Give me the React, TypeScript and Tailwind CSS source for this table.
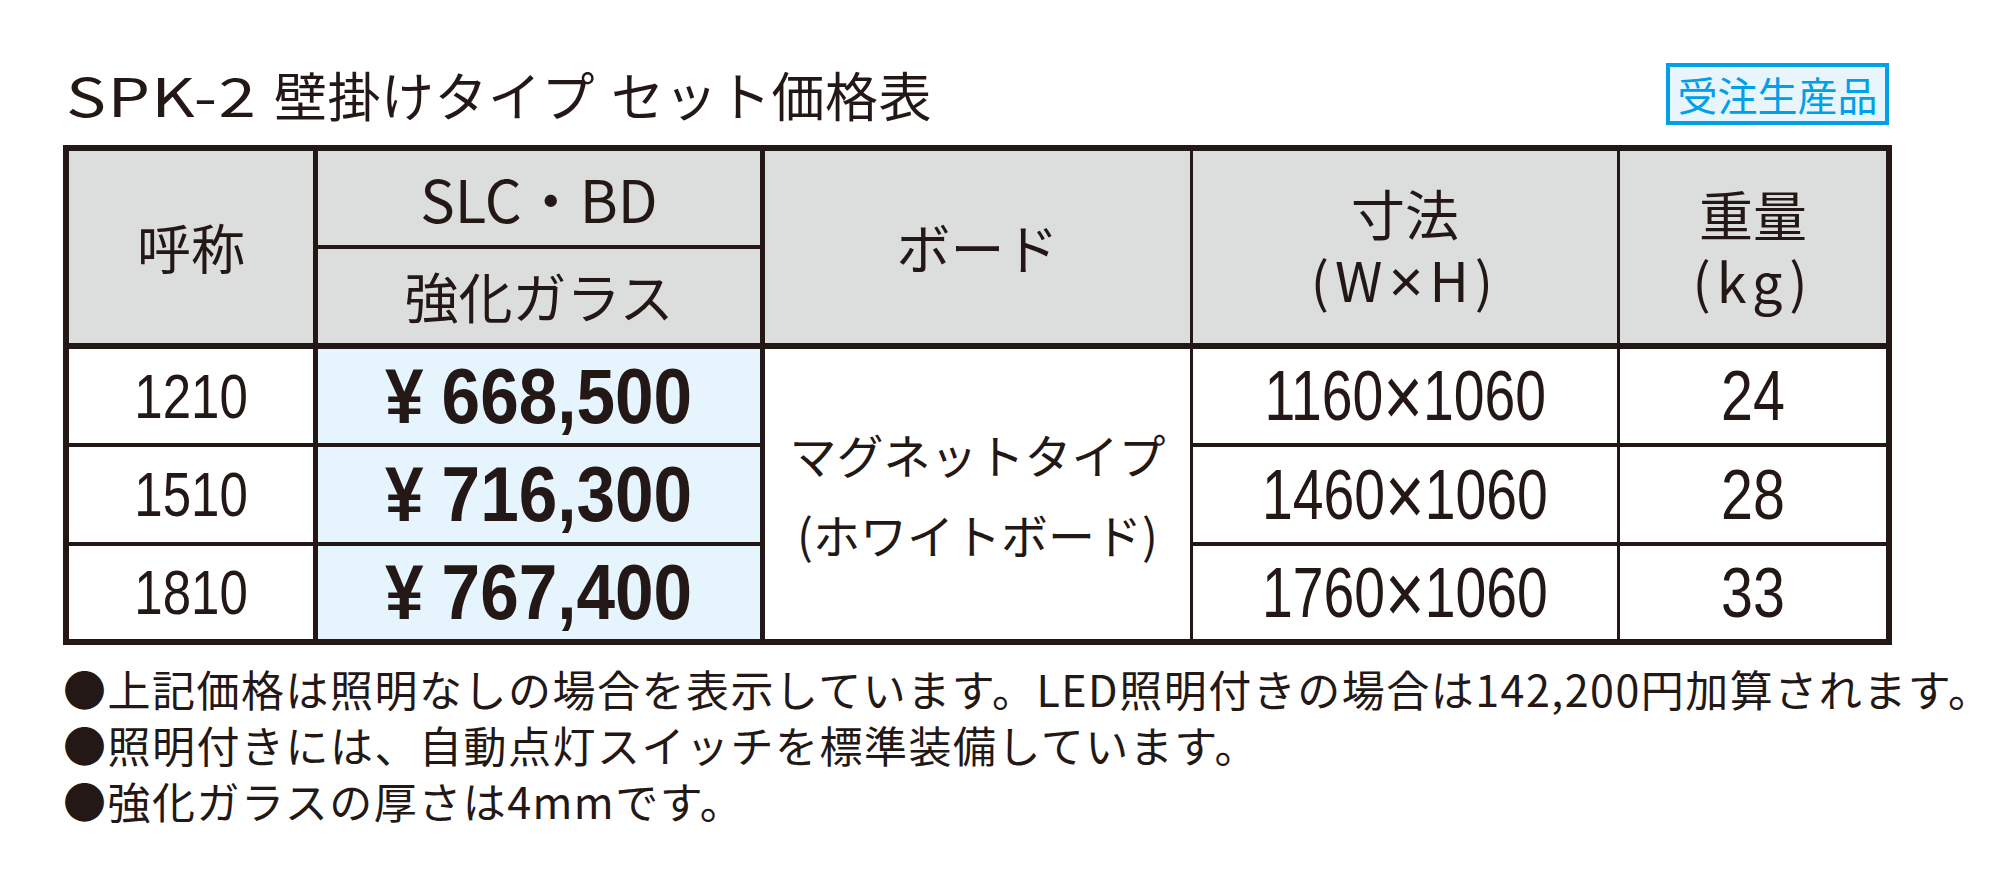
import React from "react";

const rows = [
  { name: "1210", price: "668,500", a: "1160", b: "1060", weight: "24", row: "row-start-5" },
  { name: "1510", price: "716,300", a: "1460", b: "1060", weight: "28", row: "row-start-7" },
  { name: "1810", price: "767,400", a: "1760", b: "1060", weight: "33", row: "row-start-9" },
];

const num = "font-['Liberation_Sans','Arial',sans-serif]";

export default function App() {
  return (
    <div className="min-h-[877px] w-[1998px] bg-white text-[#231815] font-['Noto_Sans_CJK_JP',sans-serif]">
      <div className="pl-[63px] pt-[62px]">
        <div className="flex h-[64px] w-[1829px] items-center justify-between">
          <h1 className="ml-[3px] flex items-center text-[53px] leading-none font-normal">
            <span className="w-[208px]">
              <span className="inline-block origin-left scale-x-[1.27] tracking-[1px]">SPK-2</span>
            </span>
            <span className="tracking-[0.5px]">壁掛けタイプ</span>
            <span className="ml-[16px] tracking-[0.5px]">セット価格表</span>
          </h1>
          <div className="mr-[3px] flex h-[62px] w-[223px] items-center justify-center border-[4px] border-[#00a0e9] bg-[#e9f5fc] text-[40px] leading-none text-[#00a0e9]">
            受注生産品
          </div>
        </div>

        <div className="mt-[19px] grid w-[1829px] grid-cols-[244px_5px_442px_5px_425px_3px_424px_3px_266px] grid-rows-[94px_4px_94px_6px_94px_4px_95px_4px_93px] border-[6px] border-[#231815] bg-[#231815]">
          {/* header */}
          <div className="col-start-1 row-start-1 row-span-3 flex items-center justify-center bg-[#dcdddd] text-[54px] leading-none">
            呼称
          </div>
          <div className="col-start-3 row-start-1 flex items-center justify-center bg-[#dcdddd] text-[58px] leading-none">
            SLC・BD
          </div>
          <div className="col-start-3 row-start-3 flex items-center justify-center bg-[#dcdddd] text-[54px] leading-none">
            強化ガラス
          </div>
          <div className="col-start-5 row-start-1 row-span-3 flex items-center justify-center bg-[#dcdddd] text-[54px] leading-none">
            ボード
          </div>
          <div className="col-start-7 row-start-1 row-span-3 flex flex-col items-center justify-center gap-[12px] bg-[#dcdddd] text-[54px] leading-none">
            <span>寸法</span>
            <span className="tracking-[6px]">
              (W<span className="mr-[6px] font-['Liberation_Sans',sans-serif] text-[60px] leading-[54px] tracking-normal">×</span>H)
            </span>
          </div>
          <div className="col-start-9 row-start-1 row-span-3 flex flex-col items-center justify-center gap-[12px] bg-[#dcdddd] text-[54px] leading-none">
            <span>重量</span>
            <span className="tracking-[6px]">(kg)</span>
          </div>

          {/* body */}
          {rows.map((r) => (
            <React.Fragment key={r.name}>
              <div className={`col-start-1 ${r.row} flex items-center justify-center bg-white ${num} text-[63px] leading-none`}>
                <span className="inline-block scale-x-[0.81]">{r.name}</span>
              </div>
              <div className={`col-start-3 ${r.row} flex items-center justify-center bg-[#e6f4fd] ${num} text-[77px] font-bold leading-none`}>
                <span className="inline-block scale-x-[0.9]">
                  <span className="mr-[20px]">¥</span>
                  {r.price}
                </span>
              </div>
              <div className={`col-start-7 ${r.row} flex items-center justify-center bg-white ${num} text-[70px] leading-none`}>
                <span className="inline-flex items-center scale-x-[0.79]">
                  {r.a}
                  <span className="text-[86px] leading-none">×</span>
                  {r.b}
                </span>
              </div>
              <div className={`col-start-9 ${r.row} flex items-center justify-center bg-white ${num} text-[70px] leading-none`}>
                <span className="inline-block scale-x-[0.82]">{r.weight}</span>
              </div>
            </React.Fragment>
          ))}
          <div className="col-start-5 row-start-5 row-span-5 flex flex-col items-center justify-center bg-white text-[47px] leading-[80px]">
            <span>マグネットタイプ</span>
            <span>(ホワイトボード)</span>
          </div>
        </div>

        <div className="mt-[15px] text-[43px] leading-[56px] tracking-[1.5px]">
          <p>●上記価格は照明なしの場合を表示しています。LED照明付きの場合は142,200円加算されます。</p>
          <p>●照明付きには、自動点灯スイッチを標準装備しています。</p>
          <p>●強化ガラスの厚さは4mmです。</p>
        </div>
      </div>
    </div>
  );
}
